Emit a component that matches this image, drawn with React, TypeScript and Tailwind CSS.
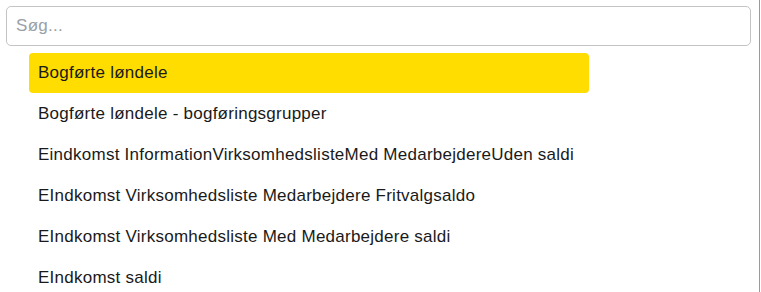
const items = [
  "Bogførte løndele",
  "Bogførte løndele - bogføringsgrupper",
  "Eindkomst InformationVirksomhedslisteMed MedarbejdereUden saldi",
  "EIndkomst Virksomhedsliste Medarbejdere Fritvalgsaldo",
  "EIndkomst Virksomhedsliste Med Medarbejdere saldi",
  "EIndkomst saldi",
];

export default function App() {
  return (
    <div className="h-[292px] w-[761px] overflow-hidden bg-white font-['Liberation_Sans',Arial,sans-serif]">
      <div className="h-full w-[760px] border-r border-[#9a9a9a] pl-[6px] pr-[8px] pt-[6px]">
        <input
          placeholder="Søg..."
          className="h-[40px] w-full rounded-[5px] border border-[#c4c4c4] px-[9px] text-[17px] tracking-[0.3px] text-[#222] outline-none placeholder:text-[#9aa0a8]"
        />
        <ul className="ml-[23px] mt-[7px] flex w-[560px] flex-col gap-px">
          {items.map((label, i) => (
            <li
              key={label}
              className={
                i === 0
                  ? "flex h-[40px] items-center rounded-[4px] bg-[#ffdd00] px-[9px] text-[17px] tracking-[0.25px] text-[#1a1a1a]"
                  : "flex h-[40px] items-center whitespace-nowrap px-[9px] text-[17px] tracking-[0.25px] text-[#1a1a1a]"
              }
            >
              {label}
            </li>
          ))}
        </ul>
      </div>
    </div>
  );
}
